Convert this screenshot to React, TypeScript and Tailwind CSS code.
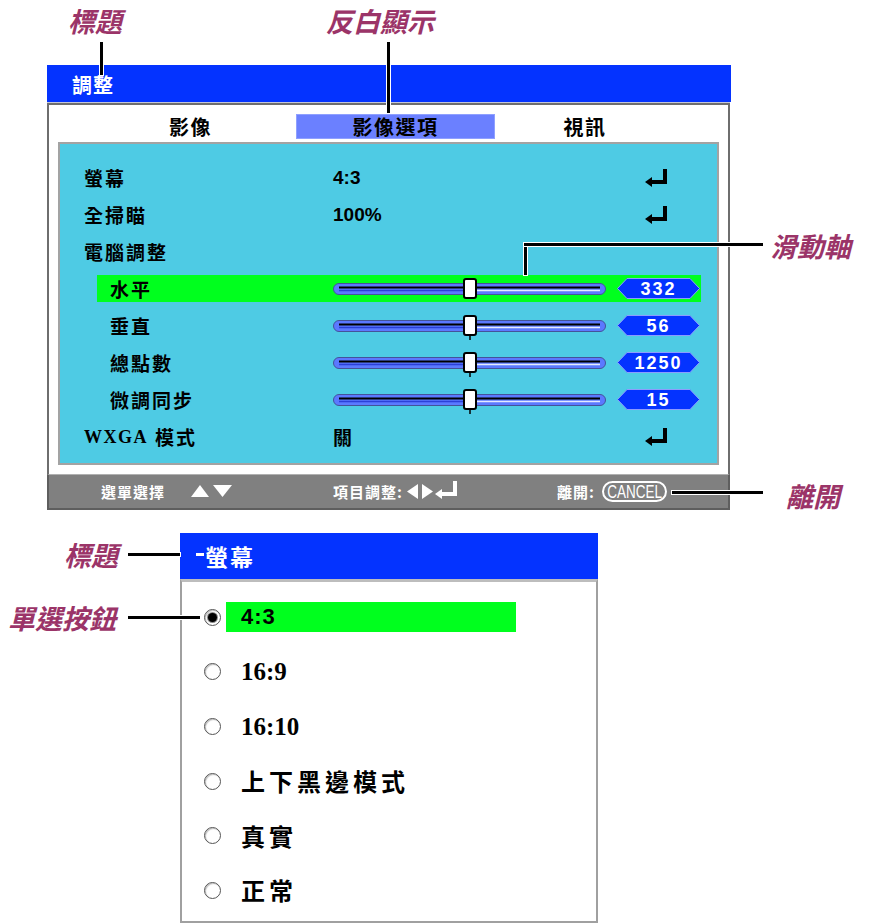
import React from "react";

const CJK = "font-['Noto_Sans_CJK_TC','Noto_Sans',sans-serif]";
const NOTE =
  "absolute font-['Noto_Sans_CJK_TC',sans-serif] font-bold italic text-[27px] leading-none text-[#9b3468] whitespace-nowrap";
const LEAD = "absolute bg-black outline-1 outline-white";

function Enter({ color = "#000" }: { color?: string }) {
  return (
    <svg width="23" height="18" viewBox="0 0 23 18" className="block">
      <rect x="18" y="0" width="4" height="15" fill={color} />
      <rect x="6" y="11" width="16" height="4" fill={color} />
      <polygon points="0,13 7,8 7,18" fill={color} />
    </svg>
  );
}

function Slider({ tick }: { tick: boolean }) {
  return (
    <svg width="273" height="30" viewBox="0 0 273 30" className="block overflow-visible">
      <rect x="0.5" y="9.5" width="272" height="11" rx="5.5" fill="#5b79ff" stroke="#44539a" />
      <line x1="6" y1="13.5" x2="267" y2="13.5" stroke="#000" strokeWidth="2" />
      <line x1="6" y1="16.5" x2="137" y2="16.5" stroke="#2b40d8" strokeWidth="1.5" />
      <line x1="137" y1="16.5" x2="267" y2="16.5" stroke="#e4eaff" strokeWidth="1.5" />
      <rect x="131" y="5" width="12" height="19" rx="2" fill="#fff" stroke="#000" strokeWidth="2" />
      {tick && <line x1="137" y1="25" x2="137" y2="29" stroke="#000" strokeWidth="1.5" />}
    </svg>
  );
}

function Badge({ v }: { v: string }) {
  return (
    <div className="relative w-[83px] h-[21px] flex items-center justify-center">
      <svg className="absolute inset-0" width="83" height="21" viewBox="0 0 83 21">
        <polygon
          points="0.5,10.5 10,0.5 73,0.5 82.5,10.5 73,20.5 10,20.5"
          fill="#0433ff"
          stroke="#8c9cff"
        />
      </svg>
      <span className="relative text-white font-bold text-[18px] tracking-[2px] leading-none font-['Liberation_Sans',sans-serif]">
        {v}
      </span>
    </div>
  );
}

function Radio({ on }: { on: boolean }) {
  return (
    <div className="w-[17px] h-[17px] rounded-full border-[1.5px] border-[#555] bg-white flex items-center justify-center shadow-[inset_1px_1px_1px_rgba(0,0,0,0.25)]">
      {on && <div className="w-[9px] h-[9px] rounded-full bg-black shadow-[0_0_0_1px_#888]" />}
    </div>
  );
}

const plain = [
  { label: "螢幕", value: "4:3" },
  { label: "全掃瞄", value: "100%" },
];

const sliders = [
  { label: "水平", v: "332" },
  { label: "垂直", v: "56" },
  { label: "總點數", v: "1250" },
  { label: "微調同步", v: "15" },
];

const options = ["4:3", "16:9", "16:10", "上下黑邊模式", "真實", "正常"];

export default function App() {
  return (
    <div className="relative w-[889px] h-[923px] overflow-hidden bg-white">
      {/* main OSD */}
      <div className="ml-[47px] pt-[65px] w-[684px]">
        <div className="h-[37px] bg-[#0433ff] flex items-center pl-[25px] pt-[2px]">
          <span className={`${CJK} text-white font-bold text-[20px] leading-none tracking-[1px]`}>調整</span>
        </div>
        <div className="w-[683px] border-t border-[#c4c6d8]">
          <div className="border-x-2 border-t-2 border-[#6e6e6e] bg-white">
            <div className="flex pt-[9px]">
              <div className={`${CJK} ml-[42px] w-[199px] h-[25px] flex items-center justify-center font-bold text-[20px] leading-none tracking-[1.5px] text-black`}>
                影像
              </div>
              <div className={`${CJK} ml-[6px] w-[199px] h-[25px] flex items-center justify-center bg-[#6b80ff] border border-[#8fa0ff] font-bold text-[20px] leading-none tracking-[1.5px] text-black`}>
                影像選項
              </div>
              <div className={`${CJK} w-[180px] h-[25px] flex items-center justify-center font-bold text-[20px] leading-none tracking-[1.5px] text-black`}>
                視訊
              </div>
            </div>
            <div className="mt-[3px] ml-[9px] w-[661px] border-2 border-[#a3a3a3] bg-[#4ecbe4] pt-[15px] pb-[8px]">
              {plain.map((r) => (
                <div key={r.label} className="h-[37px] flex items-center pl-[24px]">
                  <div className={`${CJK} w-[249px] font-bold text-[19px] tracking-[2px] leading-none`}>{r.label}</div>
                  <div className="w-[312px] font-['Liberation_Sans_Narrow','Liberation_Sans',sans-serif] font-bold text-[19px] leading-none">
                    {r.value}
                  </div>
                  <Enter />
                </div>
              ))}
              <div className="h-[37px] flex items-center pl-[24px]">
                <div className={`${CJK} font-bold text-[19px] tracking-[2px] leading-none`}>電腦調整</div>
              </div>
              {sliders.map((s, i) => (
                <div key={s.label} className="h-[37px] flex items-center">
                  <div
                    className={`ml-[37px] w-[604px] h-[27px] flex items-center pl-[13px] ${
                      i === 0 ? "bg-[#00ff1e]" : ""
                    }`}
                  >
                    <div className={`${CJK} w-[223px] font-bold text-[19px] tracking-[2px] leading-none`}>{s.label}</div>
                    <Slider tick={i > 0} />
                    <div className="ml-[11px]">
                      <Badge v={s.v} />
                    </div>
                  </div>
                </div>
              ))}
              <div className="h-[37px] flex items-center pl-[24px]">
                <div className="w-[249px] flex items-center leading-none">
                  <span className="font-['Liberation_Serif',serif] font-bold text-[18px] tracking-[1.5px]">WXGA</span>
                  <span className={`${CJK} ml-[7px] font-bold text-[19px] tracking-[2px]`}>模式</span>
                </div>
                <div className={`${CJK} w-[312px] font-bold text-[19px] leading-none`}>關</div>
                <Enter />
              </div>
            </div>
            <div className="h-[9px]" />
          </div>
          <div className="h-[36px] bg-[#808080] border-x-2 border-b-2 border-t border-[#5e5e5e] border-t-[#b0b0b0] flex items-center text-white">
            <div className="w-[52px]" />
            <div className="w-[232px] flex items-center">
              <span className={`${CJK} font-bold text-[15px] tracking-[1px] leading-none`}>選單選擇</span>
              <svg width="42" height="13" viewBox="0 0 42 13" className="ml-[26px] block">
                <polygon points="9,0 18,12 0,12" fill="#fff" />
                <polygon points="22,0 41,0 31.5,12" fill="#fff" />
              </svg>
            </div>
            <div className="w-[224px] flex items-center">
              <span className={`${CJK} font-bold text-[15px] tracking-[1px] leading-none`}>項目調整:</span>
              <svg width="28" height="15" viewBox="0 0 28 15" className="ml-[4px] block">
                <polygon points="0,7.5 11,0 11,15" fill="#fff" />
                <polygon points="15,0 26,7.5 15,15" fill="#fff" />
              </svg>
              <div className="-mt-[3px]">
                <Enter color="#fff" />
              </div>
            </div>
            <div className="flex items-center">
              <span className={`${CJK} font-bold text-[15px] tracking-[1px] leading-none`}>離開:</span>
              <div className="ml-[7px] w-[65px] h-[21px] rounded-full border-2 border-white flex items-center justify-center overflow-hidden">
                <span className="font-['Liberation_Sans',sans-serif] text-[18px] leading-none scale-x-75 tracking-[0px]">
                  CANCEL
                </span>
              </div>
            </div>
          </div>
        </div>
      </div>

      {/* sub dialog */}
      <div className="ml-[180px] mt-[23px] w-[418px]">
        <div className="h-[46px] bg-[#0433ff] flex items-center pl-[25px]">
          <span className={`${CJK} text-white font-bold text-[23px] leading-none tracking-[2px]`}>螢幕</span>
        </div>
        <div className="h-[344px] border-2 border-t-[3px] border-[#a0a0a0] border-t-[#bdbdbd] pt-[8px]">
          {options.map((o, i) => (
            <div key={o} className="h-[54.6px] flex items-center pl-[22px]">
              <Radio on={i === 0} />
              <div
                className={`ml-[5px] w-[290px] h-[30px] flex items-center pl-[15px] ${
                  i === 0 ? "bg-[#00ff1e]" : ""
                }`}
              >
                <span
                  className={
                    i === 0
                      ? "font-['Liberation_Sans_Narrow','Liberation_Sans',sans-serif] font-bold text-[22px] leading-none tracking-[1px]"
                      : /^[0-9:]+$/.test(o)
                      ? "font-['Liberation_Serif',serif] font-bold text-[25px] leading-none"
                      : `${CJK} font-bold text-[24px] leading-none tracking-[4px]`
                  }
                >
                  {o}
                </span>
              </div>
            </div>
          ))}
        </div>
      </div>

      {/* annotations */}
      <div className={`${NOTE} left-[68px] top-[7px]`}>標題</div>
      <div className={`${LEAD} left-[100px] top-[42px] w-[3px] h-[33px]`} />
      <div className={`${NOTE} left-[326px] top-[7px]`}>反白顯示</div>
      <div className={`${LEAD} left-[387px] top-[42px] w-[3px] h-[71px]`} />
      <div className={`${NOTE} left-[770px] top-[232px]`}>滑動軸</div>
      <div className={`${LEAD} left-[524px] top-[243px] w-[3px] h-[32px]`} />
      <div className={`${LEAD} left-[524px] top-[243px] w-[239px] h-[3px]`} />
      <div className={`${NOTE} left-[786px] top-[482px]`}>離開</div>
      <div className={`${LEAD} left-[672px] top-[491px] w-[91px] h-[3px]`} />
      <div className={`${NOTE} left-[64px] top-[541px]`}>標題</div>
      <div className={`${LEAD} left-[128px] top-[553px] w-[52px] h-[3px]`} />
      <div className="absolute left-[196px] top-[553px] w-[8px] h-[3px] bg-white" />
      <div className={`${NOTE} left-[8px] top-[604px]`}>單選按鈕</div>
      <div className={`${LEAD} left-[128px] top-[616px] w-[72px] h-[3px]`} />
    </div>
  );
}
